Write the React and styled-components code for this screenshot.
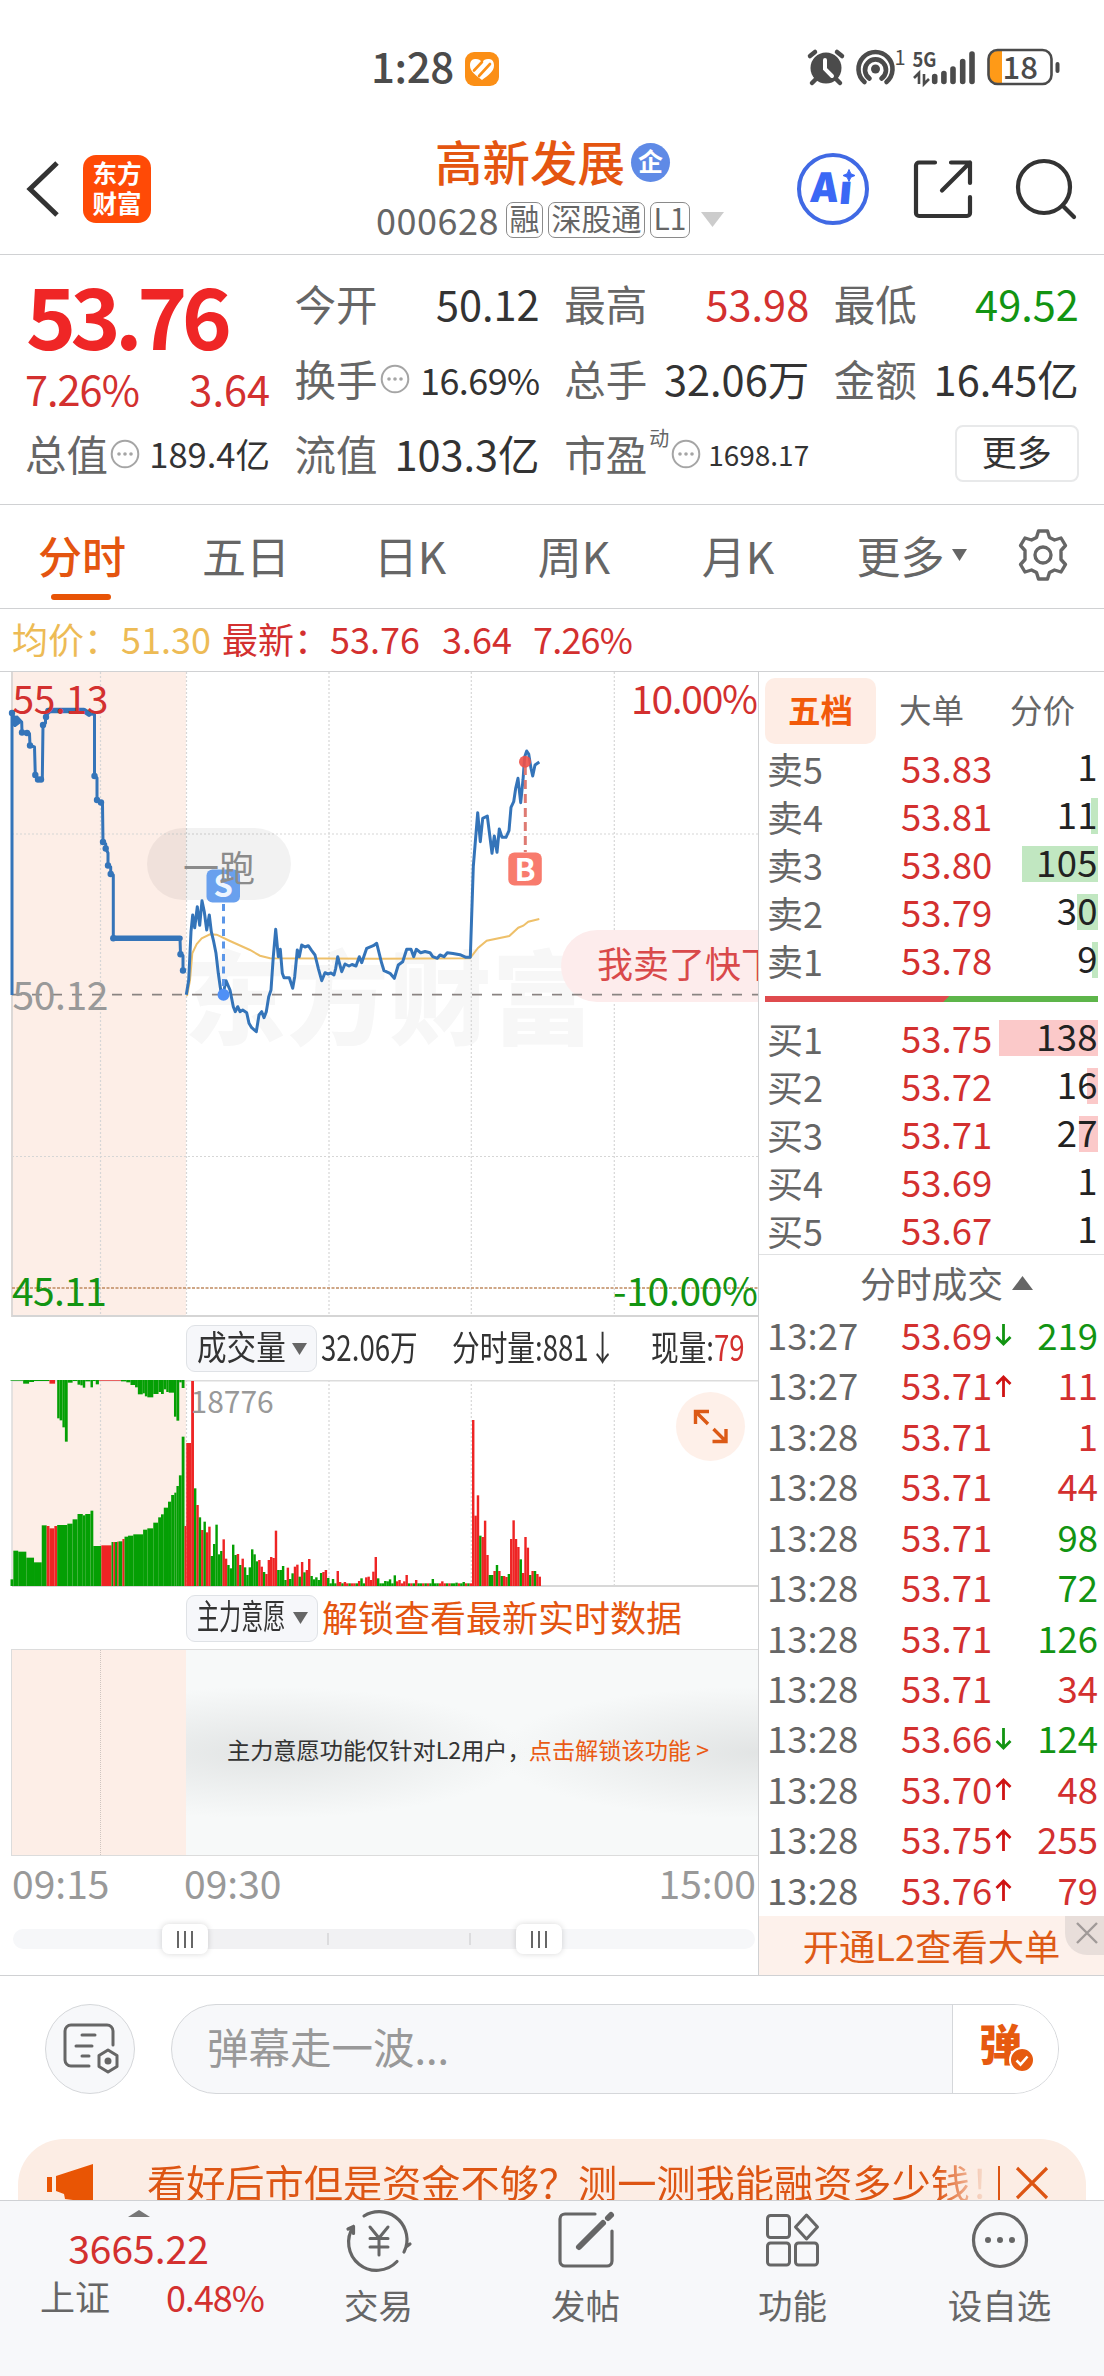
import React from 'react';
import styled, { createGlobalStyle, ThemeProvider } from 'styled-components'

const theme = {
  colors: {
    brand: '#e45510',
    up: '#d3302f',
    down: '#129412',
    text: '#333',
    label: '#666',
    muted: '#999',
    line: '#d0d1d3',
    preOpen: '#fdeee7',
  }
}

const GlobalStyle = createGlobalStyle`
  * { box-sizing: border-box; }
  body {
    margin: 0;
    background: #fff;
    color: #333;
    font-family: "Noto Sans CJK SC", sans-serif;
    line-height: 1;
  }
  svg { display: block; flex: none; overflow: visible; }
  svg text { font-family: "Noto Sans CJK SC", sans-serif; }
`

const Screen = styled.div`
  width: 1104px;
  height: 2376px;
  overflow: hidden;
  display: flex;
  flex-direction: column;
  background: #fff;
`

// text with its own colour and size; most labels of the page use it
const Txt = styled.span`
  color: ${({ theme, $color }) => theme.colors[$color] || $color || theme.colors.text};
  font-size: ${({ $size }) => $size || 36}px;
  letter-spacing: ${({ $ls }) => $ls || 0}px;
  width: ${({ $w }) => ($w ? `${$w}px` : 'auto')};
  margin-top: ${({ $mt }) => $mt || 0}px;
  white-space: nowrap;
`

/* ---------- status bar ---------- */

const StatusBar = styled.div`
  height: 130px;
  padding: 4px 43px 0 371px;
  display: flex;
  align-items: center;
  justify-content: space-between;
`

const Clock = styled.div`
  display: flex;
  align-items: center;
  gap: 11px;
  font-size: 42px;
  font-weight: 500;
  letter-spacing: -0.4px;
  color: #4b4b4b;
  span { margin-top: -4px; }
  svg { margin-top: 4px; }
`

function StatusIcons() {
  return (
    <svg width="256" height="40" viewBox="805 47 256 40" fill="#4b4b4b">
      <circle cx="826" cy="68" r="15.5" />
      <path d="M825 60v9l7 7" stroke="#fff" strokeWidth="4" fill="none" strokeLinecap="round" />
      <path d="M810 56l5-4M842 56l-5-4M816 79l-4 4M836 79l4 4" stroke="#4b4b4b" strokeWidth="4.5" strokeLinecap="round" />
      <circle cx="875.5" cy="69" r="4.5" />
      <path d="M869.5 78.5a10.500 10.500 0 1 1 12 0M864.5 82a17 17 0 1 1 22 0" stroke="#4b4b4b" strokeWidth="4.6" fill="none" strokeLinecap="round" />
      <text x="894.5" y="65" fontSize="20">1</text>
      <text x="912.5" y="66.5" fontSize="20" fontWeight="700" textLength="24" lengthAdjust="spacingAndGlyphs">5G</text>
      <path d="M914 78l5-5v11M924 74v10l5-5" stroke="#4b4b4b" strokeWidth="2.6" fill="none" />
      <path d="M934.7 76.500v5M943.9 73.500v8M953 69v12.500M962.7 61.500v20M972 54v27.500" stroke="#4b4b4b" strokeWidth="5.6" strokeLinecap="round" />
      <path d="M997 51h5v32h-5a8 8 0 0 1-8-8V59a8 8 0 0 1 8-8z" fill="#ff9a17" />
      <rect x="988.500" y="50" width="63" height="34" rx="9" fill="none" stroke="#4b4b4b" strokeWidth="2.6" />
      <rect x="1055.500" y="62" width="4" height="11" rx="2" />
      <text x="1002.500" y="79" fontSize="31" fontWeight="500">18</text>
    </svg>
  )
}

/* ---------- title bar ---------- */

const TitleBar = styled.header`
  height: 125px;
  padding: 0 27px 10px 26px;
  display: grid;
  grid-template-columns: 350px 1fr 281px;
  border-bottom: 1px solid ${({ theme }) => theme.colors.line};
`

const TitleLeft = styled.div`
  display: flex;
  align-items: center;
  gap: 24px;
`

const AppLogo = styled.div`
  width: 68px;
  height: 68px;
  border-radius: 13px;
  background: #ff4a06;
  color: #fff;
  font-size: 24.5px;
  font-weight: 700;
  line-height: 30px;
  padding-top: 3px;
  text-align: center;
  white-space: pre;
`

const TitleCenter = styled.div`
  display: flex;
  flex-direction: column;
`

const StockName = styled.h1`
  margin: 0;
  padding: 0 0 0 59px;
  height: 61px;
  display: flex;
  align-items: center;
  gap: 6px;
  font-size: 47.5px;
  font-weight: 500;
  color: ${({ theme }) => theme.colors.brand};
`

const Badge = styled.span`
  width: 39px;
  height: 39px;
  margin-top: 4px;
  border-radius: 50%;
  background: #5f8ae6;
  color: #fff;
  font-size: 25px;
  font-weight: 700;
  line-height: 35px;
  text-align: center;
`

const CodeLine = styled.div`
  height: 56px;
  display: flex;
  align-items: center;
  gap: 5px;
  svg { margin-left: 6px; }
`

const Tag = styled.span`
  height: 36px;
  margin-top: 2px;
  padding: 0 2.500px;
  border: 1.500px solid #8a8a8a;
  border-radius: 7px;
  color: #666;
  font-size: 30px;
  line-height: 29px;
`

const TitleRight = styled.div`
  display: flex;
  align-items: center;
  justify-content: space-between;
`

const AiMark = styled.text`
  && { font-family: Inter, sans-serif; }
  font-size: 41px;
  font-weight: 900;
`

/* ---------- quote ---------- */

const Quote = styled.section`
  height: 250px;
  padding: 11px 25px 0 25px;
  display: grid;
  grid-template-columns: repeat(4, 245px);
  grid-template-rows: repeat(3, 75px);
  column-gap: 24.600px;
  border-bottom: 1px solid ${({ theme }) => theme.colors.line};
`

const Cell = styled.div`
  display: flex;
  align-items: center;
  justify-content: space-between;
`

const CellLabel = styled.span`
  display: flex;
  align-items: center;
  font-size: 41.500px;
  color: ${({ theme }) => theme.colors.label};
  svg { margin-left: 2px; }
`

const LastPrice = styled.div`
  grid-row: span 2;
  display: flex;
  flex-direction: column;
  justify-content: space-between;
  padding-bottom: 7px;
  strong {
    height: 94px;
    padding-left: 1px;
    font-size: 85px;
    line-height: 93px;
    letter-spacing: -5.600px;
    color: #ef2626;
  }
`

const MoreButton = styled.button`
  justify-self: end;
  align-self: center;
  width: 124px;
  height: 57px;
  padding: 0 0 6px;
  border: 2px solid #e8e9ea;
  border-radius: 8px;
  background: #fff;
  color: #333;
  font: 35px "Noto Sans CJK SC", sans-serif;
  line-height: 45px;
`

const Sup = styled.sup`
  margin: -31px 0 0 2px;
  font-size: 20px;
  line-height: 1;
`

function InfoDots() {
  return (
    <svg width="30" height="30" viewBox="0 0 30 30" fill="#a5a5a5">
      <circle cx="15" cy="15" r="13.300" fill="none" stroke="#a5a5a5" strokeWidth="2" />
      <circle cx="9" cy="15" r="1.800" />
      <circle cx="15" cy="15" r="1.800" />
      <circle cx="21" cy="15" r="1.800" />
    </svg>
  )
}

/* ---------- period tabs ---------- */

const Tabs = styled.nav`
  height: 104px;
  display: flex;
  border-bottom: 1px solid ${({ theme }) => theme.colors.line};
`

const Tab = styled.div`
  flex: none;
  width: ${({ $w }) => $w || 164}px;
  display: flex;
  align-items: center;
  justify-content: center;
  gap: 7px;
  position: relative;
  padding-bottom: 3px;
  font-size: 44px;
  font-weight: ${({ $active }) => ($active ? 500 : 400)};
  color: ${({ theme, $active }) => ($active ? theme.colors.brand : theme.colors.label)};
  &::after {
    content: ${({ $active }) => ($active ? "''" : 'none')};
    position: absolute;
    left: 51px;
    bottom: 8px;
    width: 60px;
    height: 6px;
    border-radius: 3px;
    background: #e85406;
  }
`

const AverageBar = styled.div`
  height: 63px;
  padding: 0 0 4px 12px;
  display: flex;
  align-items: center;
  border-bottom: 1px solid ${({ theme }) => theme.colors.line};
`

/* ---------- market body ---------- */

const Market = styled.main`
  height: 1304px;
  display: grid;
  grid-template-columns: 758px 346px;
  border-bottom: 1px solid ${({ theme }) => theme.colors.line};
`

const Charts = styled.section`
  display: flex;
  flex-direction: column;
`

const ChartSvg = styled.svg`
  overflow: hidden;
`

const IndicatorBar = styled.div`
  height: ${({ $h }) => $h}px;
  padding: 0 13px 0 186px;
  display: flex;
  align-items: center;
`

const Picker = styled.div`
  width: 132px;
  height: 47px;
  margin-right: 4px;
  padding: 0 9px 0 10px;
  display: flex;
  align-items: center;
  justify-content: space-between;
  border: 1.500px solid #dfe2e6;
  border-radius: 9px;
  background: #f6f7fa;
`

// condensed text: drawn at full height, squeezed to the given width
const Squeezed = styled.span`
  width: ${({ $w }) => $w}px;
  margin-right: ${({ $mr }) => $mr || 0}px;
  margin-top: -6px;
  font-size: ${({ $size }) => $size || 35}px;
  white-space: nowrap;
  span {
    display: inline-block;
    transform: scaleX(${({ $sx }) => $sx});
    transform-origin: 0 50%;
  }
  em { font-style: normal; color: ${({ theme }) => theme.colors.up}; }
`

const Locked = styled.div`
  height: 207px;
  margin-left: 11px;
  display: grid;
  grid-template-columns: 89px 85px 1fr;
  border: 1.500px solid #dcdcdc;
  border-right: 0;
`

const PreOpenCell = styled.div`
  background: ${({ theme }) => theme.colors.preOpen};
  border-right: ${({ $dotted }) => ($dotted ? '1px dotted #cfc5c0' : '0')};
`

const LockedNotice = styled.div`
  padding: 0 0 5px 41px;
  display: flex;
  align-items: center;
  font-size: 23.200px;
  white-space: nowrap;
  color: #333;
  background:
    radial-gradient(ellipse 260px 66px at 14% 50%, rgba(205, 208, 208, 0.5), rgba(205, 208, 208, 0)),
    radial-gradient(ellipse 260px 66px at 100% 50%, rgba(205, 208, 208, 0.5), rgba(205, 208, 208, 0)),
    #f7f9f9;
  span { margin-left: -2px; color: #ea5a14; }
`

const TimeAxis = styled.div`
  height: 68px;
  padding: 0 2px 15px 12px;
  display: grid;
  grid-template-columns: 172px 1fr auto;
  align-items: center;
  font-size: 39px;
  color: ${({ theme }) => theme.colors.muted};
`

const Slider = styled.div`
  height: 20px;
  margin: 5px 3px 0 13px;
  border-radius: 10px;
  background: #f6f7f9;
  display: grid;
  grid-template-columns: 172px 143.500px 142.500px 68px 1fr;
  align-items: center;
  position: relative;
`

const SliderRange = styled.i`
  height: 20px;
  background: #f1f1f3;
  &::after {
    content: ${({ $tick }) => ($tick ? "''" : 'none')};
    display: block;
    width: 2px;
    height: 12px;
    margin: 4px 0 0 auto;
    background: #dcdcde;
  }
`

const Handle = styled.div`
  position: absolute;
  top: -5px;
  left: ${({ $left }) => $left}px;
  width: 46px;
  height: 30px;
  border-radius: 7px;
  background: #fff;
  box-shadow: 0 0 6px rgba(0, 0, 0, 0.16);
  display: flex;
  align-items: center;
  justify-content: center;
  gap: 5px;
  i { width: 2.200px; height: 17px; background: #666; }
`

/* ---------- order book ---------- */

const Book = styled.aside`
  border-left: 1px solid ${({ theme }) => theme.colors.line};
  display: flex;
  flex-direction: column;
`

const BookTabs = styled.div`
  height: 72px;
  padding: 6px 6px 0 6px;
  display: grid;
  grid-template-columns: repeat(3, 111px);
`

const BookTab = styled.div`
  height: 66px;
  padding-bottom: 4px;
  display: flex;
  align-items: center;
  justify-content: center;
  border-radius: 10px;
  font-size: 32.500px;
  font-weight: ${({ $active }) => ($active ? 700 : 400)};
  color: ${({ $active }) => ($active ? '#f25a0a' : '#666')};
  background: ${({ $active }) => ($active ? '#feede5' : 'none')};
`

const Level = styled.div`
  height: 48px;
  padding: 0 6px 0 8px;
  display: grid;
  grid-template-columns: 134px 98px 1fr;
  align-items: center;
`

const Qty = styled.div`
  display: flex;
  justify-content: flex-end;
  align-items: center;
  height: 36px;
  padding: 0 0 4px 0;
  color: #222;
  font-size: 36.500px;
  letter-spacing: 0.400px;
  background: linear-gradient(${({ $buy }) => ($buy ? '#fbc9c9, #fbc9c9' : '#c1e7c1, #c1e7c1')}) no-repeat right / ${({ $bar }) => $bar}px 100%;
`

const Ratio = styled.div`
  height: 6px;
  margin: 12px 6px 12px 6px;
  background: linear-gradient(135deg, #df4b4e 0 130px, #5db54a 130.500px);
`

const TradesTitle = styled.div`
  height: 57px;
  padding: 0 0 1px 30px;
  border-top: 1px solid #e0e1e2;
  display: flex;
  align-items: center;
  justify-content: center;
  gap: 9px;
  font-size: 35.800px;
  color: #666;
`

const Trade = styled.div`
  height: 50.450px;
  padding: 0 6px 2px 8px;
  display: grid;
  grid-template-columns: 134px 94px 20px 1fr;
  align-items: center;
  font-size: 36.500px;
  color: #666;
  span:last-child { text-align: right; }
`

const Promo = styled.div`
  flex: 1;
  display: flex;
  align-items: center;
  justify-content: center;
  position: relative;
  background: #fdf1eb;
  color: #de5a16;
  font-size: 36.300px;
`

const PromoClose = styled.div`
  position: absolute;
  top: 0;
  right: 0;
  width: 39px;
  height: 39px;
  border-bottom-left-radius: 22px;
  background: #e8deda;
  display: flex;
  align-items: center;
  justify-content: center;
  padding: 0 0 6px 5px;
`

/* ---------- comment bar, banner, bottom nav ---------- */

const CommentBar = styled.div`
  height: 163px;
  padding: 28px 45px 0;
  display: flex;
  gap: 36px;
`

const RoundButton = styled.div`
  width: 90px;
  height: 90px;
  border: 1.500px solid #d5d7da;
  border-radius: 50%;
  background: #f7f8fa;
  display: flex;
  align-items: center;
  justify-content: center;
`

const CommentInput = styled.div`
  flex: 1;
  height: 90px;
  border: 1.500px solid #d5d7da;
  border-radius: 45px;
  overflow: hidden;
  background: #f7f8fa;
  display: grid;
  grid-template-columns: 1fr 106px;
  align-items: center;
  padding-left: 35px;
`

const BarrageToggle = styled.div`
  height: 88px;
  padding-left: 26px;
  display: flex;
  align-items: center;
  border-left: 1.500px solid #d5d7da;
  background: #fff;
`

const Banner = styled.div`
  height: 61px;
  margin: 0 18px;
  padding: 25px 0 0 29px;
  display: flex;
  gap: 11px;
  overflow: hidden;
  border-radius: 46px 46px 0 0;
  background: #fcede4;
`

const BannerText = styled.div`
  width: 838px;
  margin-left: 42px;
  font-size: 39.200px;
  line-height: 34px;
  white-space: nowrap;
  color: #dd5513;
  mask-image: linear-gradient(90deg, #000 790px, transparent 842px);
`

const BottomNav = styled.footer`
  flex: 1;
  border-top: 1px solid #cfd1d4;
  background: #f7f8fa;
  display: grid;
  grid-template-columns: 275px repeat(4, 207px);
`

const NavItem = styled.div`
  display: flex;
  flex-direction: column;
  align-items: center;
  padding-top: 8px;
  gap: 16px;
  font-size: 34.500px;
  color: #666;
`

const IndexBox = styled.div`
  padding: 9px 0 0 2px;
  display: flex;
  flex-direction: column;
  align-items: center;
`

const IndexRow = styled.div`
  width: 224px;
  margin: 11px 0 0 27px;
  display: flex;
  justify-content: space-between;
`

const quoteRows = [
  { label: '今开', value: '50.12' },
  { label: '最高', value: '53.98', color: 'up' },
  { label: '最低', value: '49.52', color: 'down' },
  { label: '换手', value: '16.69%', info: true, size: 36, ls: -0.6 },
  { label: '总手', value: '32.06万' },
  { label: '金额', value: '16.45亿' },
  { label: '总值', value: '189.4亿', info: true, size: 34.5 },
  { label: '流值', value: '103.3亿' },
  { label: '市盈', value: '1698.17', info: true, sup: '动', size: 28 },
]

const sells = [
  ['卖5', '53.83', 1, 0],
  ['卖4', '53.81', 11, 7],
  ['卖3', '53.80', 105, 76],
  ['卖2', '53.79', 30, 21],
  ['卖1', '53.78', 9, 6],
]

const buys = [
  ['买1', '53.75', 138, 100],
  ['买2', '53.72', 16, 11],
  ['买3', '53.71', 27, 19],
  ['买4', '53.69', 1, 0],
  ['买5', '53.67', 1, 0],
]

const trades = [
  ['13:27', '53.69', 'down', 219, 'down'],
  ['13:27', '53.71', 'up', 11, 'up'],
  ['13:28', '53.71', '', 1, 'up'],
  ['13:28', '53.71', '', 44, 'up'],
  ['13:28', '53.71', '', 98, 'down'],
  ['13:28', '53.71', '', 72, 'down'],
  ['13:28', '53.71', '', 126, 'down'],
  ['13:28', '53.71', '', 34, 'up'],
  ['13:28', '53.66', 'down', 124, 'down'],
  ['13:28', '53.70', 'up', 48, 'up'],
  ['13:28', '53.75', 'up', 255, 'up'],
  ['13:28', '53.76', 'up', 79, 'up'],
]

const preOpenLine = '12,323 12,41 15,53 17,45 21.700,50 22,60.500 29.500,61.500 30,73.500 34.500,75 35.300,103 37.700,107.500 42.300,107.500 43,53 45.500,51 45.500,44 51.700,38 83.300,38.700 88.500,42 94.500,42.300 94.500,104 97,106 97,128 102.500,132 103,170 105.700,172 105.700,176.500 108,181 108,193.500 110.700,195 110.700,202 113.300,203 113.300,266.300 180,266.300 180.500,282.300 183,283.500 183,298.500'
const preOpenDots = [[12, 41], [15, 50], [22, 60.5], [27, 61], [30, 73.5], [35.3, 103], [38, 107.5], [41, 107.5], [43, 53], [46, 45], [94.5, 104], [97, 128], [101, 130.5], [103, 170], [105.7, 176.5], [108, 193.5], [110.7, 202], [113.3, 266.3], [180.5, 282.3], [183, 298.5]]

const priceLine = '186.3,322.7 188.7,308 191,259.7 192.7,243 194.7,255.7 197.3,234.7 199.7,253.3 202,228.7 204.3,239.7 206.7,258 209.3,243 211.3,259.7 213.7,269.7 216,281.3 218.3,301.3 220.7,318 223.3,321.3 226,308.7 230,318 233.3,334.7 235.3,339.7 237.7,334.7 240,339.7 242.7,338 246.7,340.7 249,351.3 251.7,355.7 256.3,359.7 259,343 261.7,339.7 264,345.7 266.3,339.7 268.7,324.7 271,318 273.3,284.7 275.7,257.3 278.3,284.7 280.3,277.3 282.3,301.3 284,305.7 289.3,305.7 292.7,316.3 294.7,304.7 297.3,278 299.3,284.7 301.7,273 305,275 308.3,273.7 311.7,278.7 315,283 318.3,296.3 321.7,308.7 325,300.7 328,302 331,301 334,303 335.7,296.3 337.7,284.7 341.7,299.7 345,292 349,294 352,292.5 356,294 359.3,284.7 361.7,290.7 366.7,276.3 373.3,273.7 376.7,271.3 380,284.7 381.7,291.3 384,298.7 390,301.3 394.3,306.3 398.3,293 402.7,289.7 406.7,277.3 411,277.3 413.7,284.7 416.3,277.3 420.7,280.7 425,279.500 430,280.7 432.7,284.7 437.3,286.3 440,283 444,284.7 447.3,280.7 453,281.500 460,282.7 466,285.3 470.3,285.3 473.3,194.7 477.7,140.7 480.3,169.7 482.7,146.3 487.3,144 489.7,163 492,181.3 494.3,164 497,180.3 499.3,157 502,165.3 506,165.3 509,158.7 511,135.3 513.7,129.7 515.7,116.3 518,106.3 520.7,130.7 523,108 524.7,84.7 526.7,79 528.7,82 531,96.3 532.7,104 535,93 539.3,90'

const averageLine = '187,324 190,308 192.3,281.3 196.7,272 201.7,266.3 210,262.3 216.7,262.7 230,269 250,278 260,283.7 270,286.3 380,286.7 470,286.3 478,276 486.7,268.7 509.3,264 518.3,255.7 523.3,253.7 528.3,249.7 539.3,247'

// [start, end, height, colour]
const preOpenVolume = [
  [30, 38, 20], [38, 52, 106], [52, 75, 103], [75, 97, 85], [97, 119, 71], [119, 133, 182], [133, 141, 180, 'r'], [141, 155, 173, 'r'],
  [155, 163, 180, 'r'], [163, 192, 183], [192, 207, 187], [207, 221, 200], [221, 236, 216], [236, 243, 212], [243, 258, 216],
  [258, 266, 226], [266, 289, 120], [289, 318, 122, 'r'], [318, 323, 132], [323, 328, 132, 'r'], [328, 334, 132], [334, 338, 133, 'r'],
  [338, 349, 134], [349, 355, 141, 'r'], [355, 365, 148], [365, 380, 151], [380, 408, 155], [408, 420, 169], [420, 437, 173],
  [437, 451, 190], [451, 459, 206], [459, 467, 215], [467, 479, 235], [479, 488, 253], [488, 497, 273], [497, 503, 280],
  [503, 510, 300], [510, 518, 332], [518, 526, 448], [526, 531, 180, 'r'], [531, 545, 429, 'r'], [545, 553, 615, 'r'],
]

const unmatchedVolume = [
  [30, 66, 2], [66, 83, 11], [83, 97, 6], [97, 141, 3], [141, 157, 11, 'r'], [163, 170, 115], [170, 178, 121], [178, 185, 142],
  [185, 193, 185], [193, 207, 8], [207, 221, 3], [221, 229, 14], [229, 236, 16], [236, 243, 23], [243, 258, 4], [258, 265, 22],
  [265, 273, 3], [273, 282, 13], [282, 360, 2, 'r'], [345, 360, 4], [360, 372, 7], [372, 385, 15], [385, 393, 22], [393, 407, 43],
  [407, 413, 40], [413, 420, 49], [420, 437, 52], [437, 452, 42], [452, 459, 36], [459, 467, 42], [467, 474, 28], [474, 481, 36],
  [481, 496, 38], [496, 503, 110], [503, 511, 122], [511, 518, 7], [518, 526, 24],
]

// one bar per minute from 09:33 on
const minuteVolume = 'g293 r243 g206 r168 g193 r161 r178 g90 g126 g184 g95 g105 r140 r82 g63 g53 g124 g93 r96 g63 r82 g56 g33 g56 g110 g95 g74 r78 r58 g42 r36 r78 r87 r84 r166 g48 g48 g60 g18 r55 g21 g38 r58 r64 g28 r72 g41 r48 r81 g30 g20 g26 g18 g39 r42 r48 g24 g8 g21 g8 r45 r12 g8 r12 r8 g8 r8 r8 g8 r15 g23 g8 r26 r28 r18 r43 r87 g23 g8 g8 g15 g14 g20 g8 g32 r14 r18 r8 r14 r33 g8 r8 g8 r18 g8 g8 r8 g8 r8 g8 g21 g8 g8 r8 r14 r8 g8 r8 g8 g8 g10 r8 g8 g12 r8 g8 r8 r498 r211 r272 g151 r147 r196 r93 g33 g33 r45 g63 r45 g30 r30 r27 g36 r141 r197 r141 r117 g80 r39 r147 r115 g33 r45 g45 r36 r28'.split(' ')

const gridX = [100.5, 186.5, 329, 471.3, 614.3]

const barColor = (c) => (c === 'r' ? '#ee2424' : '#049f04')

function PriceChart() {
  return (
    <ChartSvg width="758" height="645" viewBox="0 0 758 645">
      <rect x="12" y="0" width="174" height="645" fill="#fdeee7" />
      <text x="184" y="365" fontSize="102" fontWeight="900" fill="#f7f7f7" textLength="410">东方财富</text>
      <g stroke="#d6d6d6" strokeWidth="1.200" strokeDasharray="2 2">
        {gridX.map((x) => <line key={x} x1={x} x2={x} y1="0" y2="645" />)}
        <line x1="12" x2="758" y1="162" y2="162" />
        <line x1="12" x2="758" y1="484.500" y2="484.500" />
      </g>
      <line x1="12" x2="12" y1="0" y2="645" stroke="#dcd8d6" strokeWidth="2" />
      <line x1="12" x2="758" y1="644" y2="644" stroke="#d5d5d5" strokeWidth="2" />
      <line x1="12" x2="758" y1="616" y2="616" stroke="#c08a60" strokeWidth="1.500" strokeDasharray="3 1.500" />
      <rect x="561" y="258" width="240" height="72" rx="36" fill="#fdecec" />
      <line x1="12" x2="758" y1="322.700" y2="322.700" stroke="#8a8482" strokeWidth="1.800" strokeDasharray="10 10" />
      <text x="597" y="305.500" fontSize="36" fill="#d9494a">我卖了快下</text>

      <rect x="147" y="156" width="144" height="72" rx="36" fill="#000" fillOpacity="0.05" />
      <polyline points={averageLine} fill="none" stroke="#eec06a" strokeWidth="2" />
      <g fill="none" stroke="#3474b9" strokeWidth="3" strokeLinejoin="round">
        <polyline points={preOpenLine} />
        <polyline points={priceLine} />
        <path d="M48 38.500h36l5 3.500M114 266.300h66" strokeWidth="5.500" strokeLinecap="round" />
        <path d="M14 45l5 5-4 3z" strokeWidth="4" />
      </g>
      <g fill="#3474b9">
        {preOpenDots.map(([x, y]) => <circle key={`${x}-${y}`} cx={x} cy={y} r="3.200" />)}
      </g>

      <line x1="223.500" x2="223.500" y1="232" y2="320" stroke="#5b96e8" strokeWidth="3" strokeDasharray="7 5.500" />
      <circle cx="223.500" cy="322.700" r="6" fill="#4f90f6" />
      <rect x="206.500" y="197.500" width="33.500" height="33" rx="6" fill="#69a0ee" />
      <text x="223.300" y="225" fontSize="31" fontWeight="700" fill="#eef5ff" textAnchor="middle">S</text>
      <text x="183" y="209.500" fontSize="36" fill="#8b8b8b">一跑</text>

      <line x1="525.300" x2="525.300" y1="94" y2="180" stroke="#de7a72" strokeWidth="3" strokeDasharray="9 5" />
      <circle cx="525" cy="89.700" r="6" fill="#ee5148" fillOpacity="0.9" />
      <rect x="508.300" y="180.500" width="33.500" height="33" rx="6" fill="#f87b6d" />
      <text x="525" y="208.500" fontSize="31" fontWeight="700" fill="#fff" textAnchor="middle">B</text>

      <g fontSize="39">
        <text x="12.500" y="42" fill="#d3302f" textLength="96">55.13</text>
        <text x="12.500" y="338" fill="#999" textLength="96">50.12</text>
        <text x="12" y="633.500" fill="#129412" textLength="95">45.11</text>
        <text x="758" y="42" fill="#d3302f" textAnchor="end" textLength="127">10.00%</text>
        <text x="758" y="633.500" fill="#129412" textAnchor="end" textLength="145">-10.00%</text>
      </g>
    </ChartSvg>
  )
}

function VolumeChart() {
  return (
    <ChartSvg width="758" height="207" viewBox="0 0 758 207">
      <rect x="12" y="0" width="174" height="206" fill="#fdeee7" />
      <g stroke="#d6d6d6" strokeWidth="1.200" strokeDasharray="2 2">
        {gridX.map((x) => <line key={x} x1={x} x2={x} y1="0" y2="206" />)}
      </g>
      <path d="M12 .7H758M12 0V206" stroke="#dcdcdc" strokeWidth="1.500" />
      <path d="M12 206H758" stroke="#d8d8d8" strokeWidth="2" />
      <svg width="758" height="206" viewBox="0 0 2161 618" preserveAspectRatio="none">
        {preOpenVolume.map(([a, b, h, c]) => <rect key={a} x={a} y={618 - h} width={b - a} height={h} fill={barColor(c)} />)}
        {unmatchedVolume.map(([a, b, h, c]) => <rect key={a} x={a} y="0" width={b - a} height={h} fill={barColor(c)} />)}
        {minuteVolume.map((bar, i) => {
          const h = Number(bar.slice(1))
          return <rect key={i} x={553 + i * 6.775} y={618 - h} width="6.900" height={h} fill={barColor(bar[0])} />
        })}
      </svg>
      <text x="190.500" y="33" fontSize="30" fill="#999">18776</text>
      <circle cx="710.500" cy="46.500" r="34.500" fill="#fef0e9" />
      <path d="M695.500 44V31.500H709M696 32l12 12M726 49v12.500H712.500M725.500 61l-12-12" fill="none" stroke="#dc5a16" strokeWidth="3.400" />
    </ChartSvg>
  )
}

function Arrow({ dir }) {
  if (!dir) return <i />
  return (
    <svg width="17" height="24" viewBox="0 0 17 24" fill="none" strokeWidth="2.800" stroke={dir === 'up' ? '#cf1313' : '#129412'}>
      <path d={dir === 'up' ? 'M8.500 23V3M1.500 10l7-7 7 7' : 'M8.500 1v20M1.500 14l7 7 7-7'} />
    </svg>
  )
}

function Levels({ rows, buy }) {
  return rows.map(([label, price, qty, bar]) => (
    <Level key={label}>
      <Txt $size={36} $color="label">{label}</Txt>
      <Txt $size={36.5} $color="up">{price}</Txt>
      <Qty $buy={buy} $bar={bar}>{qty}</Qty>
    </Level>
  ))
}

function DropMark() {
  return (
    <svg width="15" height="12" viewBox="0 0 15 12"><path d="M0 0h15L7.500 12z" fill="#666" /></svg>
  )
}

function Header() {
  return (
    <>
      <StatusBar>
        <Clock>
          <span>1:28</span>
          <svg width="34" height="34" viewBox="0 0 34 34">
            <rect width="34" height="34" rx="9" fill="#fb8f16" />
            <path d="M5 13.500C5 8 8 7 11 7s4 1 6 3c2-2 3-3 6-3s6 1 6 6.500c0 6-6 10-12 14.500C11 23.500 5 19.500 5 13.500z" fill="#fff" />
            <path d="M9 18.500L17 10M14 24L25 12" stroke="#fb8f16" strokeWidth="2.600" strokeLinecap="round" />
          </svg>
        </Clock>
        <StatusIcons />
      </StatusBar>

      <TitleBar>
        <TitleLeft>
          <svg width="33" height="56" viewBox="0 0 33 56" fill="none" stroke="#333" strokeWidth="5">
            <path d="M31 2L4 28l27 26" />
          </svg>
          <AppLogo>{'东方\n财富'}</AppLogo>
        </TitleLeft>
        <TitleCenter>
          <StockName>高新发展<Badge>企</Badge></StockName>
          <CodeLine>
            <Txt $color="label" $size={36} $ls={0.5} $w={125}>000628</Txt>
            <Tag>融</Tag>
            <Tag>深股通</Tag>
            <Tag>L1</Tag>
            <svg width="23" height="15" viewBox="0 0 23 15"><path d="M0 0h23L11.500 15z" fill="#ccc" /></svg>
          </CodeLine>
        </TitleCenter>
        <TitleRight>
          <svg width="74" height="74" viewBox="0 0 74 74" fill="#3b68f5">
            <circle cx="37" cy="37" r="34" fill="none" stroke="#4069e4" strokeWidth="4" />
            <g transform="skewX(-5) translate(4.500 0)">
              <AiMark x="13" y="50.500" textLength="29" lengthAdjust="spacingAndGlyphs">A</AiMark>
              <AiMark x="42.500" y="52.500">ı</AiMark>
            </g>
            <path d="M53 17.500l1.800 4.200 4.200 1.800-4.200 1.800-1.800 4.200-1.800-4.200-4.200-1.800 4.200-1.800z" stroke="#3b68f5" />
          </svg>
          <svg width="60" height="60" viewBox="0 0 60 60" fill="none" stroke="#333" strokeWidth="4.200" strokeLinecap="round" strokeLinejoin="round">
            <path d="M22 3.500H6a3 3 0 0 0-3 3V54a3 3 0 0 0 3 3h48a3 3 0 0 0 3-3V38M38 3.500h19V24M57 3.500L29 31.500" />
          </svg>
          <svg width="62" height="62" viewBox="0 0 62 62" fill="none" stroke="#333" strokeWidth="4.200" strokeLinecap="round">
            <circle cx="29" cy="29" r="26" />
            <path d="M47.500 47.500L59 59" />
          </svg>
        </TitleRight>
      </TitleBar>
    </>
  )
}

function QuotePanel() {
  const cells = quoteRows.map(({ label, value, color, info, sup, size, ls }) => (
    <Cell key={label}>
      <CellLabel>
        {label}
        {sup && <Sup>{sup}</Sup>}
        {info && <InfoDots />}
      </CellLabel>
      <Txt $color={color} $size={size || 41.5} $ls={ls}>{value}</Txt>
    </Cell>
  ))
  return (
    <Quote>
      <LastPrice>
        <strong>53.76</strong>
        <Cell>
          <Txt $color="up" $size={41.5} $ls={-1}>7.26%</Txt>
          <Txt $color="up" $size={41.5}>3.64</Txt>
        </Cell>
      </LastPrice>
      {cells}
      <MoreButton>更多</MoreButton>
    </Quote>
  )
}

function Footer() {
  return (
    <>
      <CommentBar>
        <RoundButton>
          <svg width="58" height="54" viewBox="0 0 58 54" fill="none" stroke="#666" strokeWidth="3" strokeLinecap="round">
            <path d="M28 44H10a6 6 0 0 1-6-6V9a6 6 0 0 1 6-6h36a6 6 0 0 1 6 6v14M21 13h13M15 24h16M21 34h7" />
            <path d="M47 28l9 5.500v11L47 50l-9-5.500v-11z" strokeLinejoin="round" />
            <circle cx="47" cy="39" r="2" fill="#666" />
          </svg>
        </RoundButton>
        <CommentInput>
          <Txt $size={41.5} $color="muted" $mt={-5}>弹幕走一波...</Txt>
          <BarrageToggle>
            <svg width="56" height="50" viewBox="0 0 56 50">
              <text x="0" y="37" fontSize="43" fontWeight="900" fill="#e65a10">弹</text>
              <circle cx="43" cy="36" r="12" fill="#e65a10" stroke="#fff" strokeWidth="2" />
              <path d="M37.500 36.500l4 4 7-8" fill="none" stroke="#fff" strokeWidth="2.600" />
            </svg>
          </BarrageToggle>
        </CommentInput>
      </CommentBar>

      <Banner>
        <svg width="47" height="40" viewBox="0 0 47 40" fill="#e95504">
          <path d="M0 13h5v15H0zM9 12L46 0v40H26v-4l-8-1-1-5-8-3z" />
        </svg>
        <BannerText>看好后市但是资金不够？测一测我能融资多少钱！</BannerText>
        <svg width="64" height="40" viewBox="0 0 64 40" fill="none" stroke="#dd5513">
          <path d="M3 2v38" strokeWidth="2" />
          <path d="M21 4l30 30M51 4L21 34" strokeWidth="3.200" />
        </svg>
      </Banner>

      <BottomNav>
        <IndexBox>
          <svg width="22" height="7" viewBox="0 0 22 7"><path d="M0 7L11 0l11 7z" fill="#777" /></svg>
          <Txt $color="up" $size={39} $mt={11}>3665.22</Txt>
          <IndexRow>
            <Txt $size={35} $color="label">上证</Txt>
            <Txt $size={36} $color="up" $ls={-1}>0.48%</Txt>
          </IndexRow>
        </IndexBox>
        <NavItem>
          <svg width="68" height="62" viewBox="0 0 68 62" fill="none" stroke="#666" strokeWidth="3.200" strokeLinecap="round" strokeLinejoin="round">
            <path d="M19 7a28 28 0 0 1 42 31M61 38l4-3M61 38l-2 5M52 52.500A28 28 0 0 1 8.500 17.500M8.500 17.500L3 20M8.500 17.500v7" />
            <path d="M25 18l9 11 9-11M25 29.500h18M25 38h18M34 29v17" strokeWidth="3" />
          </svg>
          交易
        </NavItem>
        <NavItem>
          <svg width="62" height="62" viewBox="0 0 62 62" fill="none" stroke="#666" strokeWidth="3.200" strokeLinecap="round">
            <path d="M40 5H10a5 5 0 0 0-5 5v42a5 5 0 0 0 5 5h42a5 5 0 0 0 5-5V22" />
            <path d="M24 38L48 14M53 9l3-3" strokeWidth="6" />
          </svg>
          发帖
        </NavItem>
        <NavItem>
          <svg width="62" height="62" viewBox="0 0 62 62" fill="none" stroke="#666" strokeWidth="3">
            <rect x="5.500" y="6.500" width="22" height="22" rx="3" />
            <rect x="5.500" y="34" width="22" height="22" rx="3" />
            <rect x="33.500" y="34" width="22" height="22" rx="3" />
            <path d="M44.500 6l11 12-11 12-11-12z" strokeLinejoin="round" />
          </svg>
          功能
        </NavItem>
        <NavItem>
          <svg width="62" height="62" viewBox="0 0 62 62" fill="#666">
            <circle cx="31" cy="31" r="26.500" fill="none" stroke="#666" strokeWidth="3.200" />
            <circle cx="19" cy="31" r="3" />
            <circle cx="31" cy="31" r="3" />
            <circle cx="43" cy="31" r="3" />
          </svg>
          设自选
        </NavItem>
      </BottomNav>
    </>
  )
}

export default function App() {
  return (
    <ThemeProvider theme={theme}>
      <GlobalStyle />
      <Screen>
        <Header />
        <QuotePanel />

        <Tabs>
          <Tab $active>分时</Tab>
          <Tab>五日</Tab>
          <Tab>日K</Tab>
          <Tab>周K</Tab>
          <Tab>月K</Tab>
          <Tab $w={183}>更多<DropMark /></Tab>
          <Tab $w={80}>
            <svg width="54" height="54" viewBox="0 0 54 54" fill="none" stroke="#666" strokeWidth="3.400" strokeLinejoin="round">
              <path d="M22.500 3h9l2 6.500 5 2.500 6.500-2 4.500 7.500-4.500 5v9l4.500 5-4.500 7.500-6.500-2-5 2.500-2 6.500h-9l-2-6.500-5-2.500-6.500 2-4.500-7.500 4.500-5v-9l-4.500-5L9 10l6.500 2 5-2.500z" />
              <circle cx="27" cy="27" r="8" />
            </svg>
          </Tab>
        </Tabs>

        <AverageBar>
          <Txt $color="#edbb55" $w={109}>均价：</Txt>
          <Txt $color="#edbb55" $w={101}>51.30</Txt>
          <Txt $color="up" $w={108}>最新：</Txt>
          <Txt $color="up" $w={112}>53.76</Txt>
          <Txt $color="up" $w={91}>3.64</Txt>
          <Txt $color="up" $ls={-0.8}>7.26%</Txt>
        </AverageBar>

        <Market>
          <Charts>
            <PriceChart />
            <IndicatorBar $h={63}>
              <Picker>
                <Squeezed $w={88} $sx={0.87} $size={34}><span>成交量</span></Squeezed>
                <DropMark />
              </Picker>
              <Squeezed $w={96} $sx={0.79} $mr={35}><span>32.06万</span></Squeezed>
              <Squeezed $w={163} $sx={0.79} $mr={36}><span>分时量:881↓</span></Squeezed>
              <Squeezed $w={94} $sx={0.79}><span>现量:<em>79</em></span></Squeezed>
            </IndicatorBar>
            <VolumeChart />
            <IndicatorBar $h={62}>
              <Picker>
                <Squeezed $w={88} $sx={0.65} $size={34}><span>主力意愿</span></Squeezed>
                <DropMark />
              </Picker>
              <Txt $size={36} $color="brand" $mt={-5}>解锁查看最新实时数据</Txt>
            </IndicatorBar>
            <Locked>
              <PreOpenCell $dotted />
              <PreOpenCell />
              <LockedNotice>主力意愿功能仅针对L2用户，<span>点击解锁该功能 &gt;</span></LockedNotice>
            </Locked>
            <TimeAxis>
              <span>09:15</span>
              <span>09:30</span>
              <span>15:00</span>
            </TimeAxis>
            <Slider>
              <i />
              <SliderRange $tick />
              <SliderRange $tick />
              <SliderRange />
              <Handle $left={149}><i /><i /><i /></Handle>
              <Handle $left={503}><i /><i /><i /></Handle>
            </Slider>
          </Charts>

          <Book>
            <BookTabs>
              <BookTab $active>五档</BookTab>
              <BookTab>大单</BookTab>
              <BookTab>分价</BookTab>
            </BookTabs>
            <Levels rows={sells} />
            <Ratio />
            <Levels rows={buys} buy />
            <TradesTitle>
              分时成交
              <svg width="21" height="14" viewBox="0 0 21 14"><path d="M0 14L10.500 0 21 14z" fill="#666" /></svg>
            </TradesTitle>
            {trades.map(([time, price, dir, qty, side], i) => (
              <Trade key={i}>
                <span>{time}</span>
                <Txt $size={36.5} $color="up">{price}</Txt>
                <Arrow dir={dir} />
                <Txt $size={36.5} $color={side}>{qty}</Txt>
              </Trade>
            ))}
            <Promo>
              开通L2查看大单
              <PromoClose>
                <svg width="22" height="22" viewBox="0 0 22 22" stroke="#a09a98" strokeWidth="2.400"><path d="M1 1l20 20M21 1L1 21" /></svg>
              </PromoClose>
            </Promo>
          </Book>
        </Market>

        <Footer />
      </Screen>
    </ThemeProvider>
  )
}
